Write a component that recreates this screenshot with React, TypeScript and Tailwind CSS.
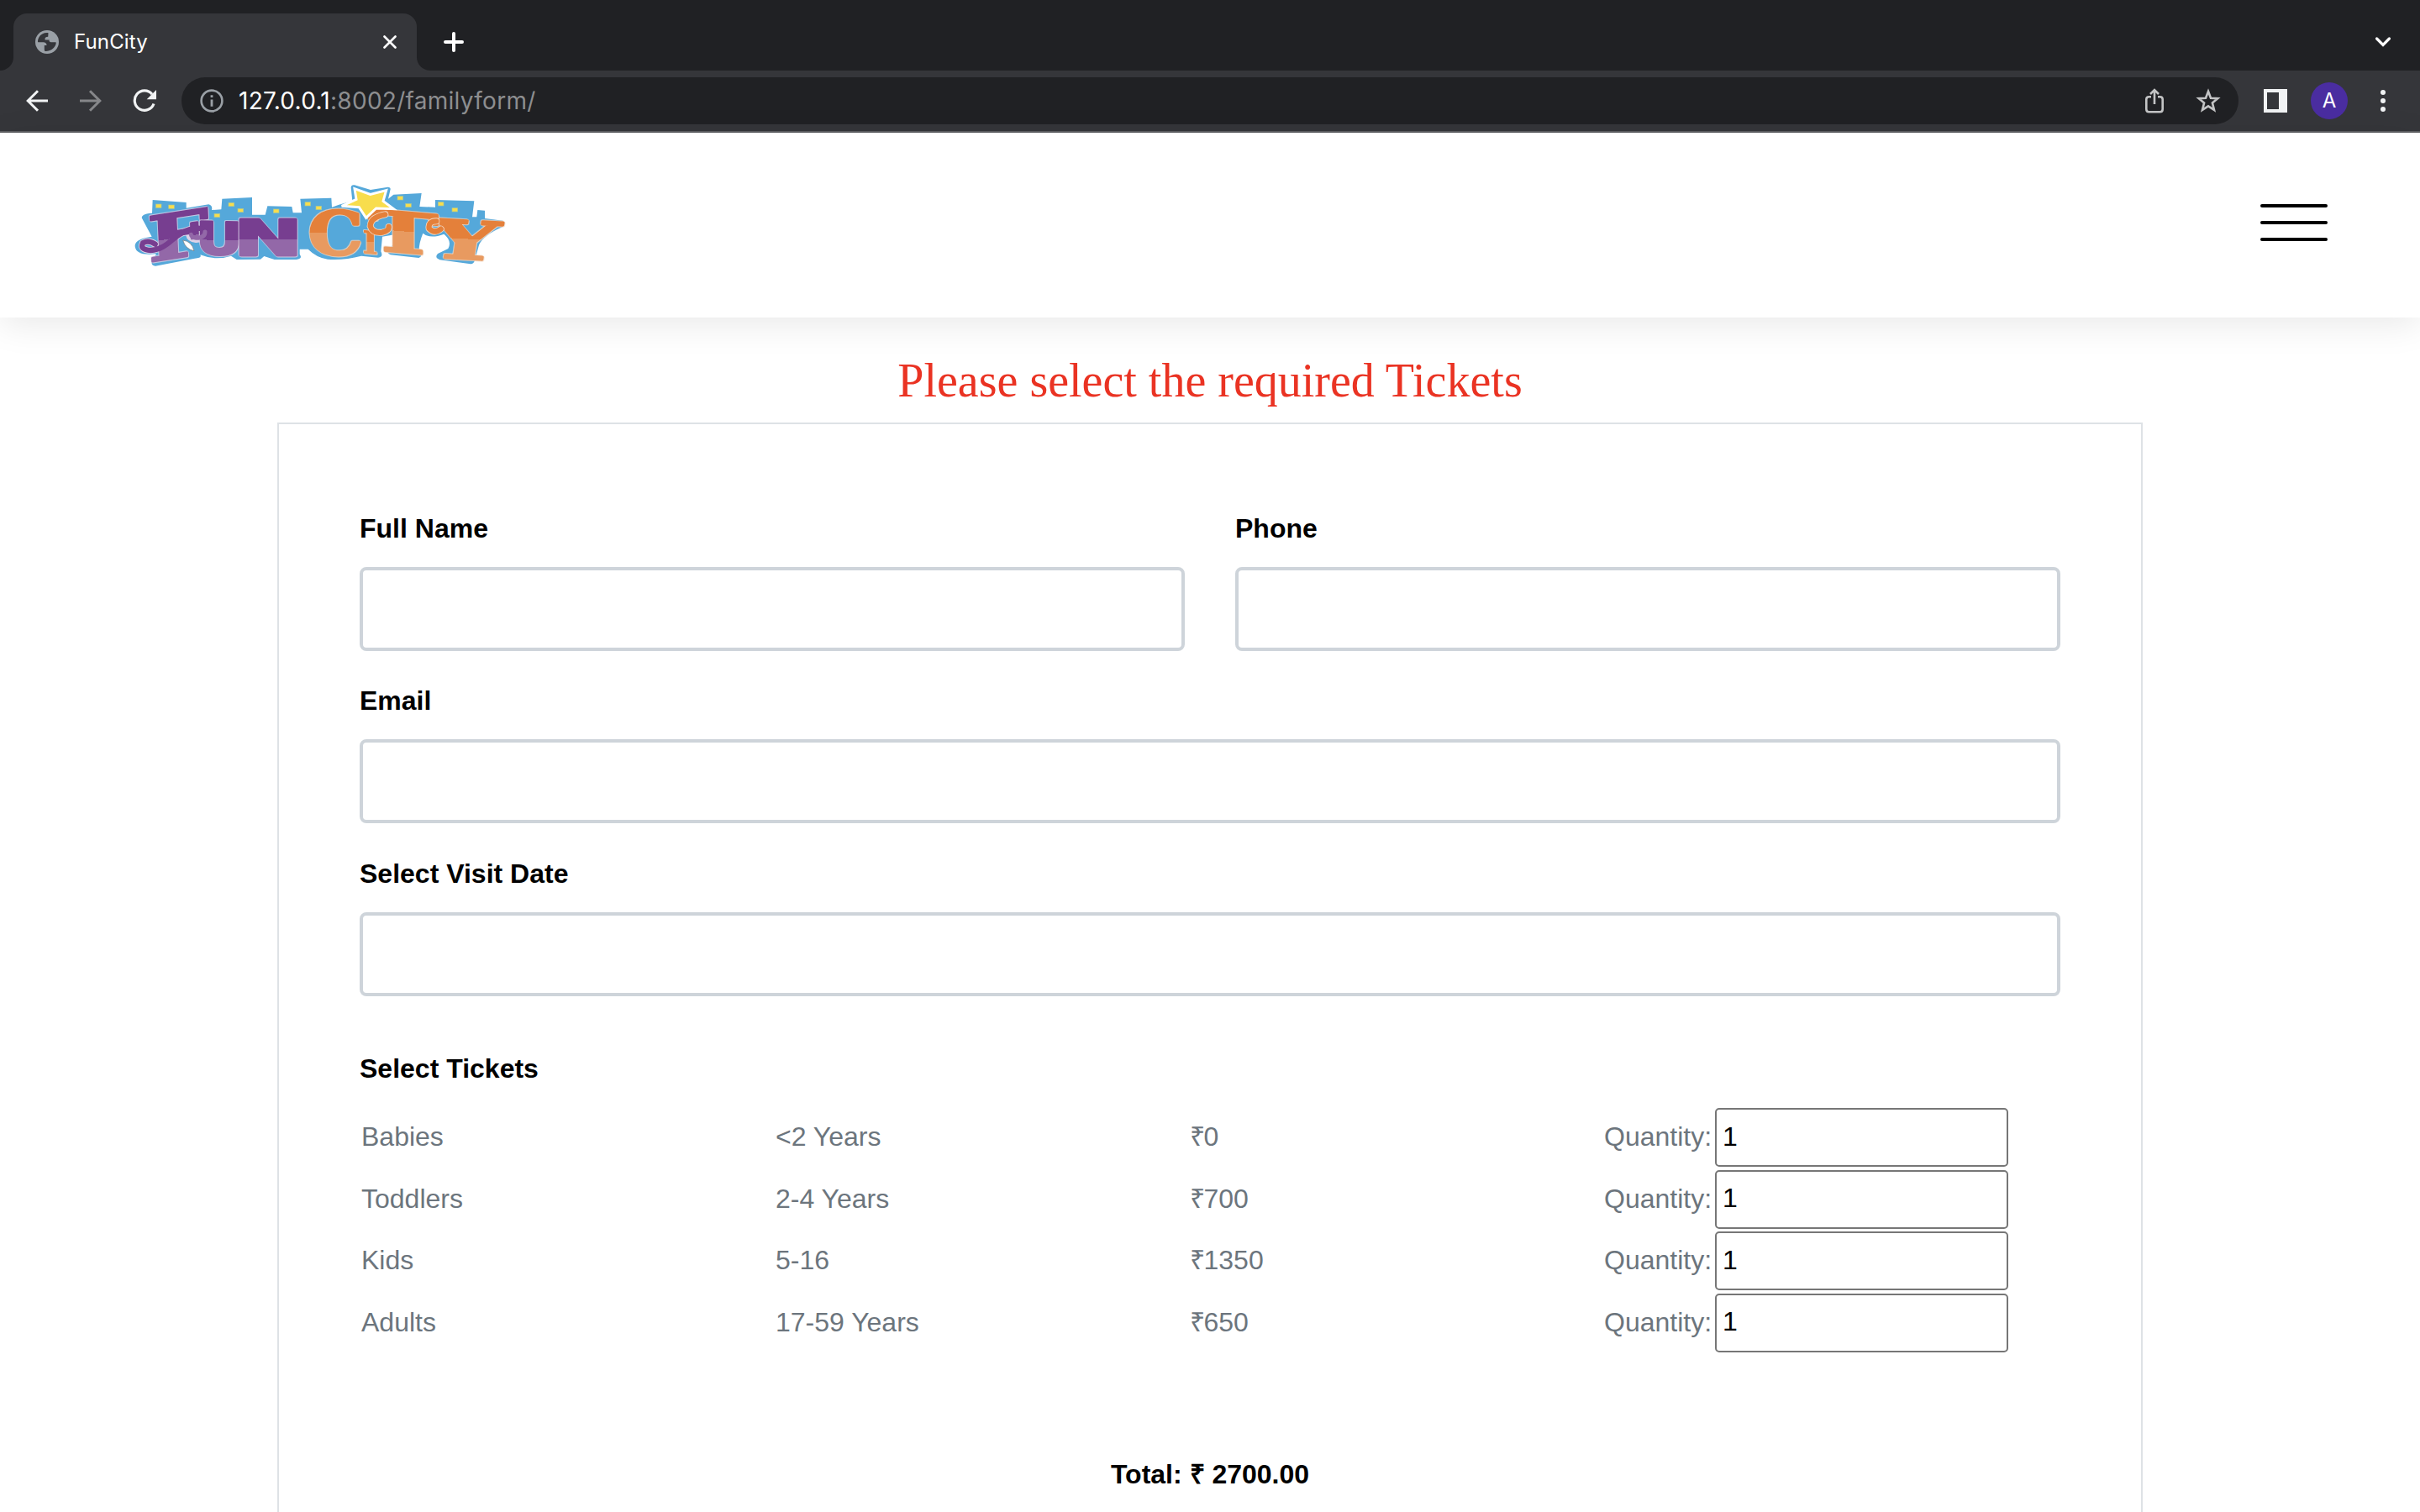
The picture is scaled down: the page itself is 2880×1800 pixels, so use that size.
type Ticket = { name: string; age: string; amount: string };

const tickets: Ticket[] = [
  { name: "Babies", age: "<2 Years", amount: "0" },
  { name: "Toddlers", age: "2-4 Years", amount: "700" },
  { name: "Kids", age: "5-16", amount: "1350" },
  { name: "Adults", age: "17-59 Years", amount: "650" },
];

function GlobeIcon() {
  return (
    <svg className="h-7 w-7" viewBox="0 0 28 28">
      <circle cx="14" cy="14" r="14" fill="#9aa0a6" />
      <path
        d="M15.5 3.2C11 2.6 6.500 4.600 4.300 8.400C3 10.900 2.700 13.200 3.200 14.300H9.500C12 14.300 13.400 15.600 13.600 18H10.800V23.500L11.500 24.900C15.500 25.500 20.500 23.400 23 19.600C24.500 17.300 25 15 24.500 14.200H18.500C16.700 14 16.300 12.700 16.700 11.500H11.600C11 9.300 12.300 7.800 15.200 7.700Z"
        fill="#35363a"
      />
    </svg>
  );
}

function CloseIcon() {
  return (
    <svg className="h-4 w-4" viewBox="0 0 16 16" fill="none" stroke="#fff" strokeWidth="2.6" strokeLinecap="round">
      <path d="M1.500 1.500L14.500 14.500M14.500 1.500L1.500 14.500" />
    </svg>
  );
}

function TabStrip() {
  return (
    <div className="flex h-[84px] items-end bg-[#202124]">
      <div className="h-4 w-4 bg-[#35363a]">
        <div className="h-4 w-4 rounded-br-2xl bg-[#202124]" />
      </div>
      <div className="flex h-[68px] w-[480px] items-center rounded-t-2xl bg-[#35363a] pr-6 pl-[26px]">
        <GlobeIcon />
        <span className="ml-[18px] text-[24px] leading-7 tracking-[0.15px] text-white">FunCity</span>
        <span className="ml-auto">
          <CloseIcon />
        </span>
      </div>
      <div className="h-4 w-4 bg-[#35363a]">
        <div className="h-4 w-4 rounded-bl-2xl bg-[#202124]" />
      </div>
      <div className="flex h-[68px] flex-1 items-center justify-between pr-[35px] pl-4">
        <svg className="h-6 w-6" viewBox="0 0 24 24" fill="none" stroke="#fff" strokeWidth="4" strokeLinecap="round">
          <path d="M12 2V22M2 12H22" />
        </svg>
        <svg className="h-3 w-[18px]" viewBox="0 0 18 12" fill="none" stroke="#fff" strokeWidth="3.200" strokeLinecap="round">
          <path d="M1.600 2L9 9.400L16.400 2" />
        </svg>
      </div>
    </div>
  );
}

function ArrowIcon({ forward = false }: { forward?: boolean }) {
  return (
    <svg
      className={forward ? "h-[26px] w-[26px] rotate-180 text-[#86878a]" : "h-[26px] w-[26px] text-[#f1f3f4]"}
      viewBox="0 0 26 26"
      fill="none"
      stroke="currentColor"
      strokeWidth="3"
    >
      <path d="M26 13H2.500M14 1.200L2.200 13L14 24.800" />
    </svg>
  );
}

function Toolbar() {
  return (
    <div className="flex h-[74px] items-center border-b-2 border-[#5d5e61] bg-[#35363a] pl-[31px]">
      <ArrowIcon />
      <span className="ml-[38px] flex">
        <ArrowIcon forward />
      </span>
      <svg className="ml-[37px] h-7 w-7" viewBox="0 0 28 28">
        <path d="M23 6.200A11.700 11.700 0 1 0 25 17.500" fill="none" stroke="#f1f3f4" strokeWidth="3.200" />
        <path d="M28 1V12.300H16.700Z" fill="#f1f3f4" />
      </svg>
      <div className="ml-[30px] flex h-14 w-[2448px] items-center rounded-full bg-[#202124] pr-[21px] pl-[22px]">
        <svg className="h-7 w-7" viewBox="0 0 28 28">
          <circle cx="14" cy="14" r="12.400" fill="none" stroke="#9aa0a6" strokeWidth="2.600" />
          <path d="M12.600 12.500H15.400V20.800H12.600ZM12.600 7.300H15.400V10.100H12.600Z" fill="#9aa0a6" />
        </svg>
        <span className="ml-[18px] text-[28px] leading-8 tracking-[0.280px] text-[#8d8e90]">
          <span className="text-white">127.0.0.1</span>:8002/familyform/
        </span>
        <svg className="ml-auto h-[30px] w-[22px]" viewBox="0 0 22 30" fill="none" stroke="#c3c4c5" strokeWidth="2.600">
          <path d="M7 10.300H4.500Q1.300 10.300 1.300 13.300V25Q1.300 28.200 4.500 28.200H17.500Q20.700 28.200 20.700 25V13.300Q20.700 10.300 17.500 10.300H15" />
          <path d="M11 19V2.500M6 7L11 2L16 7" />
        </svg>
        <svg className="ml-[38px] h-[30px] w-[30px]" viewBox="0 0 30 30" fill="none" stroke="#c3c4c5" strokeWidth="2.600">
          <path d="M15 3.800L18 11.700L26.300 12.200L19.900 17.500L22 25.800L15 21.300L8 25.800L10.100 17.500L3.700 12.200L12 11.700Z" />
        </svg>
      </div>
      <div className="ml-[30px] flex h-7 w-7 items-center bg-[#f1f3f4] pl-1">
        <div className="h-5 w-[14px] bg-[#35363a]" />
      </div>
      <div className="ml-7 flex h-11 w-11 items-center justify-center rounded-full bg-[#4a2da0] text-[24px] text-white">A</div>
      <div className="ml-[39px] flex flex-col gap-1">
        <span className="h-1.5 w-1.5 rounded-full bg-[#f1f3f4]" />
        <span className="h-1.5 w-1.5 rounded-full bg-[#f1f3f4]" />
        <span className="h-1.5 w-1.5 rounded-full bg-[#f1f3f4]" />
      </div>
    </div>
  );
}

const windowsLit = [
  [106, 99], [152, 102], [315, 133], [366, 94], [399, 115], [526, 117], [639, 92], [678, 106],
  [969, 71], [998, 97], [1114, 92], [1164, 113],
];

const letters = [
  { ch: "F", serif: true, warm: false, weight: 3.5, t: "matrix(3.05 -0.48 0.10 2.20 82 306)" },
  { ch: "U", serif: false, warm: false, weight: 5, t: "matrix(2.05 0.05 0 1.60 250 277)" },
  { ch: "N", serif: false, warm: false, weight: 5, t: "matrix(2.95 0 0 1.78 384 282)" },
  { ch: "C", serif: true, warm: true, weight: 4, t: "matrix(2.45 0 0 2.12 650 280)" },
  { ch: "I", serif: true, warm: true, weight: 3, t: "matrix(1.15 0.10 0 1.10 845 273)" },
  { ch: "Y", serif: true, warm: true, weight: 4, t: "matrix(3.35 0.18 -0.28 1.88 1082 288)" },
  { ch: "T", serif: true, warm: true, weight: 4, t: "matrix(3.30 0.28 0 1.98 867 261)" },
];

const curls = [
  "M925 136Q872 146 872 178Q880 204 915 200Q940 194 938 180",
  "M1108 160Q1078 160 1082 186Q1100 206 1124 188",
];

function Logo() {
  return (
    <svg className="h-[120px] w-[460px]" viewBox="0 0 1380 360">
      <defs>
        <linearGradient id="cool" gradientUnits="userSpaceOnUse" x1="0" y1="-73" x2="0" y2="0">
          <stop offset="0.560" stopColor="#773e90" />
          <stop offset="0.560" stopColor="#9368a8" />
        </linearGradient>
        <linearGradient id="warm" gradientUnits="userSpaceOnUse" x1="0" y1="-73" x2="0" y2="0">
          <stop offset="0.480" stopColor="#e4803a" />
          <stop offset="0.480" stopColor="#e89a60" />
        </linearGradient>
      </defs>
      <path
        fill="#55a8da"
        d="M32 245Q36 222 92 215L56 148Q56 133 93 131L95 84L215 93V113L295 100Q310 104 306 120L340 118L343 80L450 75V137H497L505 106L592 108L596 130H627L622 80L733 77L735 110L760 101L808 88L803 40Q804 28 816 31L873 48L935 38Q945 39 944 46L936 80L955 65L1055 60L1048 108L1104 110V84L1243 88L1236 145H1252L1255 120L1281 122V150L1345 158Q1360 168 1345 180Q1275 210 1260 245L1245 300Q1240 314 1230 313L1120 298Q1100 290 1113 276L1150 258Q1165 230 1135 206Q1085 225 1060 203Q1045 240 1046 268Q1062 285 1045 291L945 280Q925 270 940 257Q970 235 958 208L915 215L910 268Q920 288 900 290L840 284Q780 300 720 296Q680 290 650 260H620V278Q632 294 608 297L530 297L493 285L480 296L395 297L375 284Q320 302 265 280Q272 292 245 293L105 320Q85 318 95 298L108 277Q35 285 32 250Z"
      />
      {windowsLit.map(([x, y]) => (
        <rect key={x} x={x} y={y} width="20" height="13" fill="#f8dd4d" stroke="#a5c79a" strokeWidth="2" />
      ))}
      <path
        d="M104 242Q80 226 60 238Q48 262 88 264C150 262 170 205 225 190Q268 178 282 196Q284 222 250 225Q228 222 226 210"
        fill="none"
        stroke="#ddd3e8"
        strokeWidth="24"
        strokeLinecap="round"
      />
      {letters.map(({ ch, serif, warm, weight, t }) => (
        <g
          key={ch}
          className={
            warm
              ? "[filter:drop-shadow(2px_2px_0_#f3d9c4)_drop-shadow(-2px_-2px_0_#f3d9c4)]"
              : "[filter:drop-shadow(2px_2px_0_#ddd3e8)_drop-shadow(-2px_-2px_0_#ddd3e8)]"
          }
        >
          <text
            transform={t}
            className={serif ? "font-['DejaVu_Serif'] text-[100px] font-bold" : "font-['DejaVu_Sans'] text-[100px] font-bold"}
            fill={warm ? "url(#warm)" : "url(#cool)"}
            stroke={warm ? "url(#warm)" : "url(#cool)"}
            strokeWidth={weight}
            strokeLinejoin="round"
          >
            {ch}
          </text>
        </g>
      ))}
      {curls.map((d) => (
        <g key={d} fill="none" strokeLinecap="round">
          <path d={d} stroke="#f3d9c4" strokeWidth="24" />
          <path d={d} stroke="#e4803a" strokeWidth="19" />
        </g>
      ))}
      <path
        d="M104 242Q80 226 60 238Q48 262 88 264C150 262 170 205 225 190Q268 178 282 196"
        fill="none"
        stroke="#773e90"
        strokeWidth="19"
        strokeLinecap="round"
      />
      <path d="M282 198Q282 220 250 220Q234 218 232 208" fill="none" stroke="#9368a8" strokeWidth="15" strokeLinecap="round" />
      <path d="M203 228Q235 232 243 266Q212 260 203 228Z" fill="#fff" stroke="#777" strokeWidth="2" />
      <path
        d="M816 44L872 64L929 50L918 88L955 116L893 114L857 148L832 110L770 106L822 82Z"
        fill="#f8dd4d"
        stroke="#fff"
        strokeWidth="9"
      />
    </svg>
  );
}

function Header() {
  return (
    <header className="relative flex h-[220px] justify-between bg-white pr-[110px] pl-[150px] shadow-[0_8px_40px_rgba(0,0,0,0.09)]">
      <div className="pt-[52px]">
        <Logo />
      </div>
      <div className="mt-[85px] flex w-20 flex-col gap-4">
        <span className="h-1 rounded-full bg-black" />
        <span className="h-1 rounded-full bg-black" />
        <span className="h-1 rounded-full bg-black" />
      </div>
    </header>
  );
}

function Field({ label }: { label: string }) {
  return (
    <label className="block">
      <span className="block h-[70px] text-[32px] leading-[48px] font-bold text-black">{label}</span>
      <input className="block h-[100px] w-full rounded-lg border-4 border-[#ced4da] bg-white px-6 text-[32px] outline-none" />
    </label>
  );
}

export default function App() {
  return (
    <div className="h-[1800px] w-[2880px] overflow-hidden bg-white font-['Liberation_Sans',sans-serif]">
      <div className="font-['Inter',sans-serif]">
        <TabStrip />
        <Toolbar />
      </div>
      <Header />
      <main className="flex flex-col items-center">
        <h1 className="mt-[33px] h-[92px] font-['Liberation_Serif',serif] text-[56px] leading-[84px] text-[#ea3323]">
          Please select the required Tickets
        </h1>
        <form className="h-[1400px] w-[2220px] border-2 border-[#dee2e6] px-24 pt-[100px]">
          <div className="grid grid-cols-2 gap-x-[60px] gap-y-[35.400px]">
            <Field label="Full Name" />
            <Field label="Phone" />
            <div className="col-span-2">
              <Field label="Email" />
            </div>
            <div className="col-span-2">
              <Field label="Select Visit Date" />
            </div>
          </div>
          <h2 className="mt-[62px] text-[32px] leading-[48px] font-bold text-black">Select Tickets</h2>
          <div className="mt-[20.600px] flex flex-col pl-0.5 text-[32px] text-[#6c757d]">
            {tickets.map((ticket) => (
              <div key={ticket.name} className="grid h-[73.600px] grid-cols-[493px_493px_493px_1fr] items-center">
                <span>{ticket.name}</span>
                <span>{ticket.age}</span>
                <span>
                  <span className="tracking-[-1.500px]">₹</span>
                  {ticket.amount}
                </span>
                <span className="flex items-center">
                  <span className="w-[132px]">Quantity:</span>
                  <input
                    defaultValue="1"
                    className="mt-0.5 h-[70px] w-[349px] rounded-[5px] border-2 border-[#767676] bg-white px-[7px] pb-0.5 text-[32px] text-black outline-none"
                  />
                </span>
              </div>
            ))}
          </div>
          <p className="mt-[120.600px] text-center text-[32px] leading-[48px] font-bold text-black">Total: ₹ 2700.00</p>
        </form>
      </main>
    </div>
  );
}
